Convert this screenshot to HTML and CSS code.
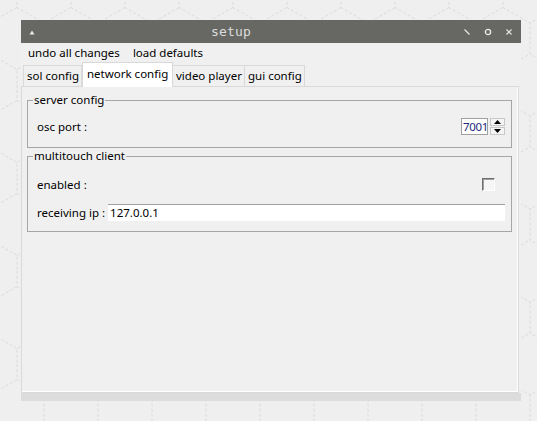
FILE: index.html
```html
<!DOCTYPE html>
<html>
<head>
<meta charset="utf-8">
<link rel="stylesheet" href="styles.css">
</head>
<body>
<div class="window">
  <div class="titlebar">
    <svg class="tb-menu" width="6" height="5" viewBox="0 0 6 5"><path d="M3 0.5L5.5 4.5H0.5Z" fill="#e8e8e8"/></svg>
    <span class="title">setup</span>
    <div class="tb-btns">
      <svg width="8" height="8" viewBox="0 0 8 8"><path d="M1.5 1.5L6.5 6.5" stroke="#e6e6e6" stroke-width="1.3" fill="none"/></svg>
      <svg width="8" height="8" viewBox="0 0 8 8"><circle cx="4" cy="4" r="2.6" stroke="#e6e6e6" stroke-width="1.4" fill="none"/></svg>
      <svg width="8" height="8" viewBox="0 0 8 8"><path d="M1.5 1.5L6.5 6.5M6.5 1.5L1.5 6.5" stroke="#e6e6e6" stroke-width="1.2" fill="none"/></svg>
    </div>
  </div>
  <div class="menubar">
    <span class="menu-item">undo all changes</span>
    <span class="menu-item">load defaults</span>
  </div>
  <div class="tabbar">
    <div class="tab t-sol">sol config</div>
    <div class="tab t-net active">network config</div>
    <div class="tab t-video">video player</div>
    <div class="tab t-gui">gui config</div>
  </div>
  <div class="pane">
    <fieldset class="group g-server">
      <legend>server config</legend>
      <div class="row">
        <span class="label">osc port :</span>
        <div class="spin">
          <div class="spin-text">7001<span class="caret"></span></div>
          <div class="spin-btns">
            <div class="spin-btn"><svg width="7" height="4" viewBox="0 0 7 4"><path d="M3.5 0L7 4H0Z" fill="#000"/></svg></div>
            <div class="spin-btn"><svg width="7" height="4" viewBox="0 0 7 4"><path d="M0 0H7L3.5 4Z" fill="#000"/></svg></div>
          </div>
        </div>
      </div>
    </fieldset>
    <fieldset class="group g-multi">
      <legend>multitouch client</legend>
      <div class="row">
        <span class="label">enabled :</span>
        <span class="checkbox"></span>
      </div>
      <div class="row row-ip">
        <span class="label">receiving ip :</span>
        <div class="textfield">127.0.0.1</div>
      </div>
    </fieldset>
  </div>
  <div class="statusbar"></div>
</div>
</body>
</html>
```
FILE: styles.css
```css
html, body {
  margin: 0;
  padding: 0;
}
body {
  width: 537px;
  height: 421px;
  overflow: hidden;
  background-color: #efefef;
  background-image: url("data:image/svg+xml,%3Csvg xmlns='http://www.w3.org/2000/svg' width='54' height='93'%3E%3Cpath d='M27 0V15.5L54 31V62L27 77.5V93M27 15.5L0 31V62L27 77.5' fill='none' stroke='%23dadada' stroke-width='1' stroke-dasharray='3 2'/%3E%3C/svg%3E");
  background-position: 44px 85px;
  font-family: "Noto Sans", "Open Sans", sans-serif;
  font-size: 11.5px;
  color: #000;
}
.window {
  margin: 20px 0 0 21px;
  width: 500px;
  background: #f0f0f0;
  display: flex;
  flex-direction: column;
}
.titlebar {
  height: 23px;
  background: #676863;
  display: flex;
  align-items: center;
  padding: 0 8px 0 8px;
}
.tb-menu {
  margin-top: 1px;
}
.title {
  flex: 1;
  text-align: center;
  font-family: "DejaVu Sans Mono", monospace;
  font-size: 13px;
  color: #dcdcdc;
  letter-spacing: 0.2px;
  padding-right: 36px;
  margin-top: -1px;
}
.tb-btns {
  display: flex;
  gap: 13px;
  align-items: center;
}
.menubar {
  height: 19px;
  display: flex;
  align-items: center;
  gap: 13px;
  padding-left: 7px;
}
.menu-item {
  line-height: 16px;
  padding-top: 1px;
}
.tabbar {
  height: 24px;
  display: flex;
  align-items: flex-end;
  padding-left: 2px;
  position: relative;
  z-index: 1;
}
.tab {
  height: 21px;
  box-sizing: border-box;
  border: 1px solid #d9d9d9;
  border-bottom: none;
  background: #f0f0f0;
  line-height: 20px;
  padding-left: 3px;
}
.tab + .tab {
  border-left: none;
}
.tab.active {
  height: 25px;
  margin-bottom: -1px;
  background: #fff;
  border-left: 1px solid #d9d9d9;
  line-height: 21px;
  padding-left: 4px;
}
.t-sol { width: 59px; }
.t-net { width: 91px; }
.t-video { width: 72px; }
.t-gui { width: 60px; }
.pane {
  width: 498px;
  height: 307px;
  box-sizing: border-box;
  border: 1px solid #d9d9d9;
  box-shadow: inset 0 -1px 0 #fff, inset -1px 0 0 #fff;
  background: #f0f0f0;
  padding: 5px 6px 0 5px;
  display: flex;
  flex-direction: column;
}
.group {
  margin: 0;
  border: 1px solid #a6a6a6;
  padding: 0 6px 0 9px;
  min-width: 0;
  display: flex;
  flex-direction: column;
}
.group legend {
  margin-left: -4px;
  padding: 0 1px;
  line-height: 16px;
}
.g-server {
  padding-top: 10px;
  padding-bottom: 12px;
}
.g-multi {
  padding-top: 12px;
  padding-bottom: 10px;
  gap: 11px;
}
.row {
  height: 17px;
  display: flex;
  align-items: center;
  justify-content: space-between;
}
.label {
  line-height: 16px;
}
.spin {
  display: flex;
  height: 17px;
  width: 44px;
}
.spin-text {
  width: 27px;
  box-sizing: border-box;
  border: 1px solid #a0a0a0;
  background: #fff;
  color: #1d2a7a;
  display: flex;
  align-items: center;
  padding-left: 1px;
  line-height: 15px;
  letter-spacing: -0.3px;
}
.caret {
  width: 2px;
  height: 14px;
  background: #000;
  margin-left: 1px;
}
.spin-btns {
  width: 17px;
  display: flex;
  flex-direction: column;
  justify-content: center;
  gap: 1px;
  padding-left: 2px;
  box-sizing: border-box;
}
.spin-btn {
  height: 7px;
  display: flex;
  align-items: center;
  justify-content: center;
  background: #f4f4f4;
  border: 1px solid #c8c8c8;
}
.checkbox {
  width: 13px;
  height: 13px;
  box-sizing: border-box;
  border: 1px solid;
  border-color: #6e6e6e #ffffff #ffffff #6e6e6e;
  box-shadow: inset 1px 1px 0 #a0a0a0;
  background: #f6f6f6;
  margin-right: 10px;
}
.row-ip {
  justify-content: flex-start;
  gap: 3px;
}
.textfield {
  flex: 1;
  height: 17px;
  box-sizing: border-box;
  background: #fff;
  border-top: 1px solid #a0a0a0;
  padding-left: 2px;
  line-height: 15px;
}
.statusbar {
  height: 8px;
  background: #dcdcdc;
}
```
